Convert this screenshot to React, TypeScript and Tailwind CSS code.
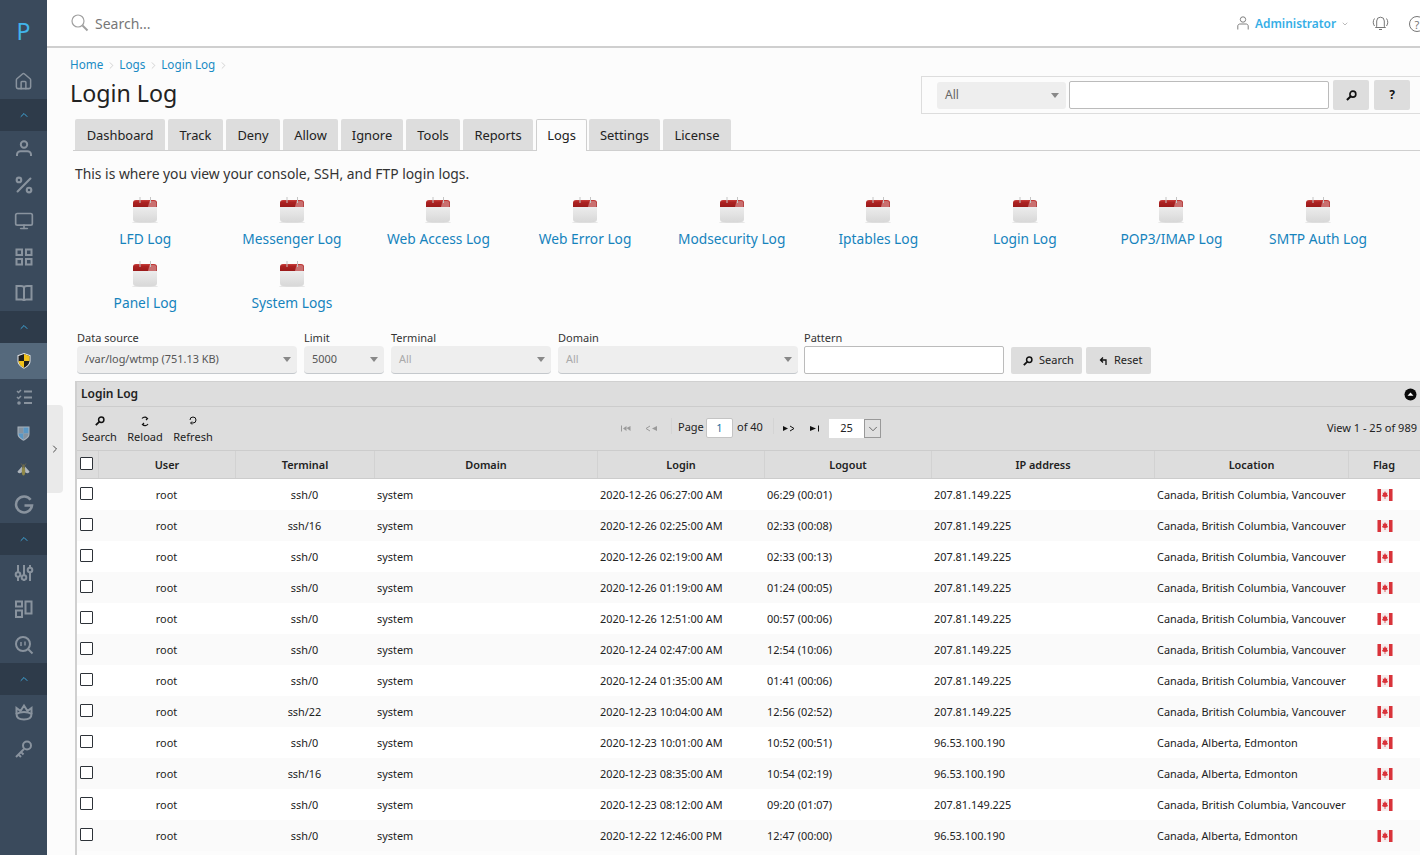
import React from "react";
import { House, Percent, Monitor, ChevronUp, ChevronDown, ChevronRight } from "lucide-react";

const iconCls = "text-[#89939e]";
const I = ({ children }: { children: React.ReactNode }) => (
  <svg width="20" height="20" viewBox="0 0 20 20" fill="none" stroke="#89939e" strokeWidth="2" className={iconCls}>{children}</svg>
);

const Chev = () => (
  <div className="h-[32px] bg-[#2e3b4a] flex items-center justify-center">
    <ChevronUp size={12} strokeWidth={1.8} className="text-[#3fb1e8]" />
  </div>
);
const Item = ({ children, active }: { children: React.ReactNode; active?: boolean }) => (
  <div className={active ? "h-[36px] bg-[#55697c] flex items-center justify-center" : "h-[36px] flex items-center justify-center"}>{children}</div>
);

const Sidebar = () => (
  <div className="absolute left-0 top-0 w-[47px] h-[855px] bg-[#3a4a5c]">
    <div className="h-[63px] flex items-center justify-center text-[#41b4ea] text-[23px] font-normal leading-none pb-[1px]">P</div>
    <Item><House size={19} strokeWidth={1.9} className={iconCls} /></Item>
    <Chev />
    <Item><I><circle cx="10" cy="5.500" r="3.200" /><path d="M3 17v-1.500c0-2 2-3.300 3.500-3.300h7c1.500 0 3.500 1.300 3.500 3.300V17" /></I></Item>
    <Item><Percent size={22} strokeWidth={2.300} className={iconCls} /></Item>
    <Item><Monitor size={20} strokeWidth={2} className={iconCls} /></Item>
    <Item><I><rect x="2.500" y="2.500" width="5.500" height="5.500" /><rect x="12" y="2.500" width="5.500" height="5.500" /><rect x="2.500" y="12" width="5.500" height="5.500" /><rect x="12" y="12" width="5.500" height="5.500" /></I></Item>
    <Item><I><path d="M2.500 3h4.500c1.500 0 3 .8 3 2 0-1.200 1.500-2 3-2h4.500v13.500h-5c-1.200 0-2.500.5-2.500 1.500 0-1-1.300-1.500-2.500-1.500h-5z" /><path d="M10 5v13" /></I></Item>
    <Chev />
    <Item active>
      <svg width="14" height="16" viewBox="0 0 14 16">
        <path d="M7 0 13.500 2.300V8c0 3.500-3.200 6-6.500 7.800C3.700 14 .5 11.500.5 8V2.300z" fill="#e8e8e8" />
        <path d="M7 1 12.500 3V8c0 3-2.700 5.200-5.500 6.800C4.200 13.200 1.500 11 1.500 8V3z" fill="#1f1f1f" />
        <path d="M7 1 12.500 3V8H7zM7 8v6.800C4.200 13.200 1.500 11 1.500 8z" fill="#f2c21a" />
      </svg>
    </Item>
    <Item><I><path d="M3 4l1.500 1.500L7 3M3 10l1.500 1.500L7 9" strokeWidth="1.500" /><circle cx="5" cy="16" r="1.800" fill="#89939e" stroke="none" /><path d="M10 4.500h8M10 10.500h8M10 16h8" /></I></Item>
    <Item>
      <svg width="13" height="15" viewBox="0 0 13 15">
        <path d="M.5.500h12V8c0 3.200-3 5.300-6 6.800-3-1.500-6-3.600-6-6.800z" fill="#a9b3bc" />
        <path d="M1.500 1.500h5V7.500h-5z" fill="#8593a0" />
        <path d="M6.500 1.500h5V7.500h-5zM6.500 7.500v6.200C4 12.300 1.500 10.500 1.500 8v-.5z" fill="#5a97c4" />
        <path d="M6.500 7.500h5V8c0 2.500-2.500 4.300-5 5.700z" fill="#8593a0" />
      </svg>
    </Item>
    <Item>
      <svg width="13" height="13" viewBox="0 0 13 13">
        <path d="M5 3.500.5 8.500c.3 2 2.500 2.300 4.500.7zM8 3.500l4.500 5c-.3 2-2.500 2.300-4.500.7z" fill="#aeb5bc" />
        <ellipse cx="6.500" cy="8" rx="1.700" ry="4.500" fill="#8f8848" />
        <circle cx="6.500" cy="2.800" r="1.500" fill="#6d6a4c" />
        <path d="M5 2 4 .3M8 2 9 .3" stroke="#6d6a4c" strokeWidth=".7" />
      </svg>
    </Item>
    <Item>
      <I><path d="M16.600 4.800A8 8 0 1 0 18 10.500H10.500" strokeWidth="2.500" /></I>
    </Item>
    <Chev />
    <Item><I><path d="M4 2v16M10 2v16M16 2v16" /><circle cx="4" cy="11.500" r="2.300" fill="#3a4a5c" /><circle cx="10" cy="14.500" r="2.300" fill="#3a4a5c" /><circle cx="16" cy="7" r="2.300" fill="#3a4a5c" /></I></Item>
    <Item><I><rect x="2" y="2.500" width="6" height="5" /><rect x="2" y="11.500" width="6" height="6.500" /><rect x="11.500" y="2.500" width="6" height="12" /></I></Item>
    <Item><I><circle cx="9" cy="9" r="7" /><path d="M14 14l4.500 4.500" /><path d="M7 7v4M11 6.500v4" strokeWidth="1.500" /></I></Item>
    <Chev />
    <Item><I><path d="M2.500 11V5l4 3L10 2.500 13.500 8l4-3v6" /><path d="M2.500 11c0 4 3 5.500 7.500 5.500s7.500-1.500 7.500-5.500c-2-1.500-4.500-2-7.500-2s-5.500.5-7.500 2z" /></I></Item>
    <Item><I><circle cx="13" cy="6.500" r="4" /><path d="M10 10 2 18M4.500 15.500l2.500 2.500M7 13l2.500 2.500" /></I></Item>
  </div>
);

const Mag = ({ size = 11, color = "#111" }: { size?: number; color?: string }) => (
  <svg width={size} height={size} viewBox="0 0 12 12" fill="none" stroke={color}>
    <circle cx="7.500" cy="4.500" r="3.200" strokeWidth="1.800" />
    <path d="M5 7 1 11" strokeWidth="2.200" />
  </svg>
);

const Calendar = ({ id }: { id: string }) => (
  <svg width="26" height="26" viewBox="0 0 26 26" className="block mx-auto">
    <defs>
      <linearGradient id={`b${id}`} x1="0" y1="0" x2="0" y2="1">
        <stop offset="0" stopColor="#f6f6f6" />
        <stop offset="1" stopColor="#d8d8d8" />
      </linearGradient>
      <linearGradient id={`r${id}`} x1="0" y1="0" x2="0" y2="1">
        <stop offset="0" stopColor="#c9403c" />
        <stop offset=".3" stopColor="#ad2222" />
        <stop offset="1" stopColor="#9a1a1a" />
      </linearGradient>
    </defs>
    <ellipse cx="13" cy="25.300" rx="13" ry=".7" fill="#dedede" />
    <rect x="1" y="3" width="24" height="22" rx="3" fill={`url(#b${id})`} />
    <path d="M1 10V6a3 3 0 0 1 3-3h18a3 3 0 0 1 3 3v4z" fill={`url(#r${id})`} />
    <path d="M16 10l1.500-6H22a2.500 2.500 0 0 1 2.500 2.500V10z" fill="#c96f6f" />
    <rect x="7.500" y="0" width="1" height="6" fill="#c4c4c4" />
    <rect x="18" y="0" width="1" height="6" fill="#c4c4c4" />
  </svg>
);

const Flag = () => (
  <svg width="16" height="12" viewBox="0 0 16 12" className="block">
    <rect width="16" height="12" fill="#f6eeee" />
    <rect x=".5" width="3.500" height="12" fill="#d9333a" />
    <rect x="12" width="3.500" height="12" fill="#d9333a" />
    <path d="M8 2 9 4l1.300-.5L10 6l1-.3L10.500 7.500 8.400 8V10h-.8V8L5.500 7.500 5 5.700 6 6 5.700 3.500 7 4z" fill="#d9333a" />
  </svg>
);

const CaretSel = ({ w, text, disabled }: { w: string; text: string; disabled?: boolean }) => (
  <div className={`${w} h-[28px] bg-[#eeeeee] rounded-[4px] border-b border-[#c4c8cc] flex items-center justify-between pl-[8px] pr-[6px] text-[10.900px] ${disabled ? "text-[#aaaaaa]" : "text-[#555555]"}`}>
    <span>{text}</span>
    <span className="w-0 h-0 border-l-[4px] border-r-[4px] border-t-[5px] border-l-transparent border-r-transparent border-t-[#888888]" />
  </div>
);

const Field = ({ label, w, mr, children }: { label: string; w: string; mr: string; children: React.ReactNode }) => (
  <div className={`${w} ${mr}`}>
    <div className="h-[16px] text-[11px] leading-[16px] text-[#333333]">{label}</div>
    {children}
  </div>
);

const tabs: [string, string][] = [
  ["Dashboard", "w-[90px]"], ["Track", "w-[55px]"], ["Deny", "w-[54px]"], ["Allow", "w-[55px]"], ["Ignore", "w-[62px]"],
  ["Tools", "w-[54px]"], ["Reports", "w-[70px]"], ["Logs", "w-[51px] -mr-[1px]"], ["Settings", "w-[71px]"], ["License", "w-[68px]"],
];

const logRow1 = ["LFD Log", "Messenger Log", "Web Access Log", "Web Error Log", "Modsecurity Log", "Iptables Log", "Login Log", "POP3/IMAP Log", "SMTP Auth Log"];
const logRow2 = ["Panel Log", "System Logs"];

const BC = "Canada, British Columbia, Vancouver";
const AB = "Canada, Alberta, Edmonton";
const IP1 = "207.81.149.225";
const IP2 = "96.53.100.190";
const rows = [
  ["ssh/0", "2020-12-26 06:27:00 AM", "06:29 (00:01)", IP1, BC],
  ["ssh/16", "2020-12-26 02:25:00 AM", "02:33 (00:08)", IP1, BC],
  ["ssh/0", "2020-12-26 02:19:00 AM", "02:33 (00:13)", IP1, BC],
  ["ssh/0", "2020-12-26 01:19:00 AM", "01:24 (00:05)", IP1, BC],
  ["ssh/0", "2020-12-26 12:51:00 AM", "00:57 (00:06)", IP1, BC],
  ["ssh/0", "2020-12-24 02:47:00 AM", "12:54 (10:06)", IP1, BC],
  ["ssh/0", "2020-12-24 01:35:00 AM", "01:41 (00:06)", IP1, BC],
  ["ssh/22", "2020-12-23 10:04:00 AM", "12:56 (02:52)", IP1, BC],
  ["ssh/0", "2020-12-23 10:01:00 AM", "10:52 (00:51)", IP2, AB],
  ["ssh/16", "2020-12-23 08:35:00 AM", "10:54 (02:19)", IP2, AB],
  ["ssh/0", "2020-12-23 08:12:00 AM", "09:20 (01:07)", IP1, BC],
  ["ssh/0", "2020-12-22 12:46:00 PM", "12:47 (00:00)", IP2, AB],
];
const cols = "grid grid-cols-[21px_137px_139px_223px_167px_167px_223px_194px_71px]";
const Box = () => <span className="block w-[13px] h-[13px] border-[1.500px] border-[#2d3238] bg-white rounded-[1px]" />;

export default function App() {
  return (
    <div className="relative w-[1420px] h-[855px] overflow-hidden bg-[#fcfcfc] font-['Open_Sans',sans-serif] text-[#222222]">
      <Sidebar />
      <div className="absolute left-[47px] top-[405px] w-[16px] h-[88px] bg-[#eaeaea] rounded-r-[4px] flex items-center justify-center">
        <ChevronRight size={12} strokeWidth={1.600} className="text-[#222]" />
      </div>

      <div className="absolute left-[47px] right-0 top-0 h-[48px] bg-white border-b-2 border-[#cfcfcf] flex items-center">
        <svg width="18" height="18" viewBox="0 0 18 18" fill="none" stroke="#a0a0a0" className="absolute left-[24px] top-[14px]">
          <circle cx="7" cy="7" r="6" strokeWidth="1.200" />
          <path d="M11.500 11.500l5 5" strokeWidth="2" />
        </svg>
        <span className="absolute left-[48px] top-[14px] text-[14px] leading-[19px] text-[#777777]">Search...</span>
        <svg width="12" height="14" viewBox="0 0 12 14" fill="none" stroke="#808080" className="absolute left-[1190px] top-[16px]">
          <circle cx="6" cy="3.500" r="2.700" />
          <path d="M.8 13.500V10c0-1.200 1-2 2-2h6.400c1 0 2 .8 2 2v3.500" />
        </svg>
        <span className="absolute left-[1208px] top-[15px] text-[11.900px] font-semibold leading-[17px] text-[#35aee6]">Administrator</span>
        <ChevronDown size={8} strokeWidth={1.500} className="absolute left-[1294px] top-[20px] text-[#777]" />
        <svg width="17" height="16" viewBox="0 0 17 16" fill="none" stroke="#777" className="absolute left-[1325px] top-[15px]">
          <path d="M4.700 11.500V6a3.800 3.800 0 0 1 7.600 0v5.500l1.200 1H3.500z" />
          <path d="M7 14.500h3M2.500 3.500C.8 6 .8 8.500 2.500 11M14.500 3.500c1.700 2.500 1.700 5 0 7.500" />
        </svg>
        <span className="absolute left-[1362px] top-[16px] w-[16px] h-[16px] rounded-full border border-[#777] flex items-center justify-center text-[11px] leading-none text-[#777]">?</span>
      </div>

      <div className="absolute left-[70px] top-[57px] flex items-center h-[16px] text-[11.700px] text-[#1a8bc4]">
        <span>Home</span><ChevronRight size={11} strokeWidth={1.200} className="text-[#b0b0b0] mx-[2.500px]" />
        <span>Logs</span><ChevronRight size={11} strokeWidth={1.200} className="text-[#b0b0b0] mx-[2.500px]" />
        <span>Login Log</span><ChevronRight size={11} strokeWidth={1.200} className="text-[#b0b0b0] mx-[2.500px]" />
      </div>
      <h1 className="absolute left-[70px] top-[77px] text-[23.200px] leading-[33px] font-normal text-[#222]">Login Log</h1>

      <div className="absolute left-[921px] top-[76px] w-[499px] h-[38px] border border-r-0 border-[#dddddd] flex items-center">
        <div className="ml-[15px] w-[129px] h-[27px] bg-[#eeeeee] rounded-[3px] flex items-center justify-between pl-[8px] pr-[7px] text-[12px] text-[#666]">
          <span>All</span>
          <span className="w-0 h-0 border-l-[4px] border-r-[4px] border-t-[5px] border-l-transparent border-r-transparent border-t-[#888888]" />
        </div>
        <div className="ml-[3px] w-[260px] h-[28px] bg-white border border-[#bbbbbb] rounded-[2px]" />
        <div className="ml-[4px] w-[36px] h-[30px] bg-[#dddddd] rounded-[2px] flex items-center justify-center"><Mag /></div>
        <div className="ml-[5px] w-[36px] h-[30px] bg-[#dddddd] rounded-[2px] flex items-center justify-center text-[12px] font-bold text-[#111]">?</div>
      </div>

      <div className="absolute left-[73px] right-0 top-[150px] h-[1px] bg-[#cfcfcf]" />
      <div className="absolute left-[75px] top-[119px] flex gap-[3px]">
        {tabs.map(([t, w]) => (
          <div key={t} className={t === "Logs"
            ? `${w} h-[32px] bg-[#fcfcfc] border border-b-0 border-[#cfcfcf] rounded-t-[2px] flex items-center justify-center text-[12.900px] text-[#222]`
            : `${w} h-[31px] pt-[2px] bg-[#dddddd] rounded-t-[2px] flex items-center justify-center text-[12.900px] text-[#222]`}>{t}</div>
        ))}
      </div>

      <p className="absolute left-[75px] top-[164px] text-[13.860px] leading-[19px] text-[#333]">This is where you view your console, SSH, and FTP login logs.</p>

      <div className="absolute left-[72px] top-[197px] w-[1320px]">
        {[logRow1, logRow2].map((r, i) => (
          <div key={i} className="flex h-[64px]">
            {r.map((t) => (
              <div key={t} className="w-[146.600px] text-center">
                <div className="h-[26px]"><Calendar id={t.replace(/[^A-Za-z0-9]/g, "")} /></div>
                <div className="mt-[6px] text-[13.750px] leading-[19px] text-[#1583bc] whitespace-nowrap">{t}</div>
              </div>
            ))}
          </div>
        ))}
      </div>

      <div className="absolute left-[77px] top-[330px] flex items-start">
        <Field label="Data source" w="w-[220px]" mr="mr-[7px]"><CaretSel w="w-[220px]" text="/var/log/wtmp (751.13 KB)" /></Field>
        <Field label="Limit" w="w-[80px]" mr="mr-[7px]"><CaretSel w="w-[80px]" text="5000" /></Field>
        <Field label="Terminal" w="w-[160px]" mr="mr-[7px]"><CaretSel w="w-[160px]" text="All" disabled /></Field>
        <Field label="Domain" w="w-[240px]" mr="mr-[6px]"><CaretSel w="w-[240px]" text="All" disabled /></Field>
        <Field label="Pattern" w="w-[200px]" mr="mr-[7px]"><div className="w-[200px] h-[28px] bg-white border border-[#bbbbbb] rounded-[2px]" /></Field>
        <div className="mt-[17px] w-[71px] h-[27px] bg-[#dddddd] rounded-[2px] flex items-center pl-[12px] gap-[6px] text-[11px] text-[#222]"><Mag size={10} />Search</div>
        <div className="mt-[17px] ml-[4px] w-[65px] h-[27px] bg-[#dddddd] rounded-[2px] flex items-center pl-[13px] gap-[5px] text-[11px] text-[#222]">
          <svg width="10" height="10" viewBox="0 0 10 10" fill="none" stroke="#111" strokeWidth="1.300"><path d="M4 1.500 1.500 4 4 6.500M1.500 4H7v5" /></svg>
          Reset
        </div>
      </div>

      <div className="absolute left-[75px] top-[381px] w-[1345px] h-[474px] border-l-2 border-t border-[#d0d0d0]">
        <div className="h-[25px] bg-[#dddddd] border-b border-[#cccccc] flex items-center justify-between pl-[4px] pr-[3px] text-[12px] font-semibold text-[#222]">
          <span>Login Log</span>
          <svg width="13" height="13" viewBox="0 0 13 13"><circle cx="6.500" cy="6.500" r="6" fill="#0a0a0a" /><path d="M3.500 7.800 6.500 4.500l3 3.300z" fill="#ffffff" /></svg>
        </div>
        <div className="relative h-[44px] bg-[#dddddd] border-b border-[#cccccc] text-[11px] text-[#222]">
          <div className="absolute left-[5px] top-[6px] w-[35px] text-center leading-[15px]"><div className="flex justify-center h-[16px] items-center"><Mag size={10} /></div>Search</div>
          <div className="absolute left-[50px] top-[6px] w-[36px] text-center leading-[15px]"><div className="flex justify-center h-[16px] items-center">
            <svg width="10" height="11" viewBox="0 0 10 11" fill="none" stroke="#111" strokeWidth="1.200"><path d="M2 2.500a3.500 3.500 0 0 1 5.500 0M8 8a3.500 3.500 0 0 1-5.500.5M5.500 1l2 1.500-1.500 1.500M4.500 9.500l-2-1L4 7" /></svg>
          </div>Reload</div>
          <div className="absolute left-[96px] top-[6px] w-[40px] text-center leading-[15px]"><div className="flex justify-center h-[16px] items-center">
            <svg width="10" height="10" viewBox="0 0 10 10" fill="none" stroke="#111" strokeWidth="1"><path d="M2 4a3 3 0 1 1 3 3H3M4 5.500 2.500 7 4 8.500" /></svg>
          </div>Refresh</div>

          <svg width="10" height="7" viewBox="0 0 10 7" className="absolute left-[544px] top-[18px]" fill="#9a9a9a"><rect x="0" y="0.500" width="1" height="6" /><path d="M2 3.500 5.500 1v5zM5.500 3 9.500 1v5z" /></svg>
          <svg width="13" height="7" viewBox="0 0 13 7" className="absolute left-[568px] top-[18px]" fill="#9a9a9a"><path d="M7 3.500 12 1v5z" /><path d="M5 1 1 3.500 5 6" fill="none" stroke="#9a9a9a" /></svg>
          <div className="absolute left-[594px] top-[11px] w-[1px] h-[16px] bg-[#d4d4d4]" />
          <span className="absolute left-[601px] top-[12px] leading-[15px]">Page</span>
          <div className="absolute left-[629px] top-[11px] w-[27px] h-[20px] bg-white border border-[#c4c4c4] rounded-[2px] flex items-center justify-center text-[#1c6fa0]">1</div>
          <span className="absolute left-[660px] top-[12px] leading-[15px]">of 40</span>
          <div className="absolute left-[696px] top-[11px] w-[1px] h-[16px] bg-[#d4d4d4]" />
          <svg width="12" height="7" viewBox="0 0 12 7" className="absolute left-[706px] top-[18px]"><path d="M0 1 5 3.500 0 6z" fill="#111" /><path d="M7 1l4 2.500L7 6" fill="none" stroke="#111" /></svg>
          <svg width="10" height="7" viewBox="0 0 10 7" className="absolute left-[733px] top-[18px]" fill="#111"><path d="M0 1 6 3.500 0 6z" /><rect x="8" y="0.500" width="1" height="6" /></svg>
          <div className="absolute left-[752px] top-[12px] w-[52px] h-[19px] flex">
            <div className="w-[35px] bg-white flex items-center justify-center text-[#222]">25</div>
            <div className="flex-1 bg-[#e0e0e0] border border-[#999999] flex items-center justify-center"><ChevronDown size={14} strokeWidth={1.300} className="text-[#444]" /></div>
          </div>
          <span className="absolute right-[3px] top-[13px] leading-[15px]">View 1 - 25 of 989</span>
        </div>
        <div className={`${cols} h-[28px] bg-[#dddddd] border-b border-[#cccccc] text-[10.900px] font-semibold text-[#222]`}>
          <div className="pl-[3px] pt-[6px]"><Box /></div>
          {["User", "Terminal", "Domain", "Login", "Logout", "IP address", "Location", "Flag"].map((h) => (
            <div key={h} className="border-l border-[#d2d2d2] flex items-center justify-center pt-[1px]">{h}</div>
          ))}
        </div>
        {rows.map((r, i) => (
          <div key={i} className={`${cols} h-[31px] items-center text-[10.900px] text-[#222] ${i % 2 === 0 ? "bg-white" : "bg-[#fafafa]"}`}>
            <div className="pl-[3px] -mt-[2px]"><Box /></div>
            <div className="text-center relative top-[1px]">root</div>
            <div className="text-center relative top-[1px]">{r[0]}</div>
            <div className="pl-[3px] relative top-[1px]">system</div>
            <div className="pl-[3px] relative top-[1px]">{r[1]}</div>
            <div className="pl-[3px] relative top-[1px]">{r[2]}</div>
            <div className="pl-[3px] relative top-[1px]">{r[3]}</div>
            <div className="pl-[3px] relative top-[1px] whitespace-nowrap">{r[4]}</div>
            <div className="pl-[29px]"><Flag /></div>
          </div>
        ))}
      </div>
    </div>
  );
}
